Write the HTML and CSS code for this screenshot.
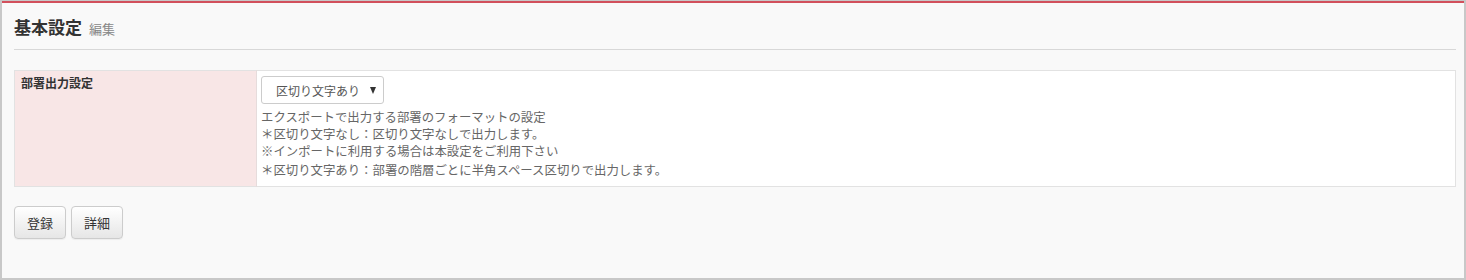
FILE: index.html
```html
<!DOCTYPE html>
<html lang="ja">
<head>
<meta charset="utf-8">
<link rel="stylesheet" href="styles.css">
</head>
<body>
<div class="frame">
  <div class="topbar"></div>
  <div class="content">
    <div class="header">
      <span class="title">基本設定</span><span class="sub">編集</span>
    </div>
    <div class="rule"></div>
    <table class="form">
      <tr>
        <th>部署出力設定</th>
        <td>
          <div class="select"><span>区切り文字あり</span><span class="arrow"></span></div>
          <div class="desc">
            <div>エクスポートで出力する部署のフォーマットの設定</div>
            <div>＊区切り文字なし：区切り文字なしで出力します。</div>
            <div>※インポートに利用する場合は本設定をご利用下さい</div>
            <div class="last">＊区切り文字あり：部署の階層ごとに半角スペース区切りで出力します。</div>
          </div>
        </td>
      </tr>
    </table>
    <div class="buttons">
      <button class="btn">登録</button>
      <button class="btn">詳細</button>
    </div>
  </div>
</div>
</body>
</html>
```
FILE: styles.css
```css
html, body {
  margin: 0;
  padding: 0;
  background: #ffffff;
}
body {
  font-family: "Noto Sans CJK JP", "Noto Sans", sans-serif;
  color: #555;
}
.frame {
  width: 1466px;
  height: 280px;
  box-sizing: border-box;
  border: 2px solid #c8c8c8;
  border-top: 1px solid #c8c8c8;
  background: #f9f9f9;
}
.topbar {
  height: 2px;
  background: #d2505c;
}
.content {
  padding: 12px 8px 0 12px;
}
.header {
  height: 24px;
  line-height: 24px;
  display: flex;
  align-items: baseline;
  gap: 7px;
}
.title {
  font-size: 17px;
  font-weight: bold;
  color: #333;
}
.sub {
  font-size: 13px;
  color: #888;
}
.rule {
  margin-top: 10px;
  height: 1px;
  background: #d8d8d8;
}
.form {
  margin-top: 20px;
  width: 100%;
  border-collapse: collapse;
  border: 1px solid #e2e2e2;
  background: #fff;
}
.form th {
  width: 229px;
  background: #f8e6e6;
  border-right: 1px solid #e6dcdc;
  text-align: left;
  vertical-align: top;
  padding: 3px 6px 5px 6px;
  font-size: 12px;
  line-height: 18px;
  font-weight: bold;
  color: #333;
}
.form td {
  padding: 5px 5px 7px 4px;
  vertical-align: top;
}
.select {
  height: 26px;
  width: 100px;
  border: 1px solid #ccc;
  border-radius: 3px;
  background: #fff;
  display: flex;
  align-items: center;
  justify-content: space-between;
  padding: 0 7px 0 14px;
  box-sizing: content-box;
  font-size: 12px;
  color: #555;
}
.select .arrow {
  width: 0;
  height: 0;
  border-left: 3.5px solid transparent;
  border-right: 3.5px solid transparent;
  border-top: 7px solid #333;
  margin-top: 1px;
}
.desc {
  margin-top: 5px;
  font-size: 12.4px;
  line-height: 17px;
  color: #666;
}
.desc .last {
  margin-top: 2px;
}
.buttons {
  margin-top: 19px;
  display: flex;
  gap: 5px;
}
.btn {
  width: 52px;
  height: 33px;
  border: 1px solid #ccc;
  border-radius: 4px;
  background: linear-gradient(#ffffff, #e6e6e6);
  font-family: "Noto Sans CJK JP", sans-serif;
  font-size: 13px;
  color: #333;
  padding: 0;
  box-shadow: 0 1px 1px rgba(0,0,0,0.05);
}
```
